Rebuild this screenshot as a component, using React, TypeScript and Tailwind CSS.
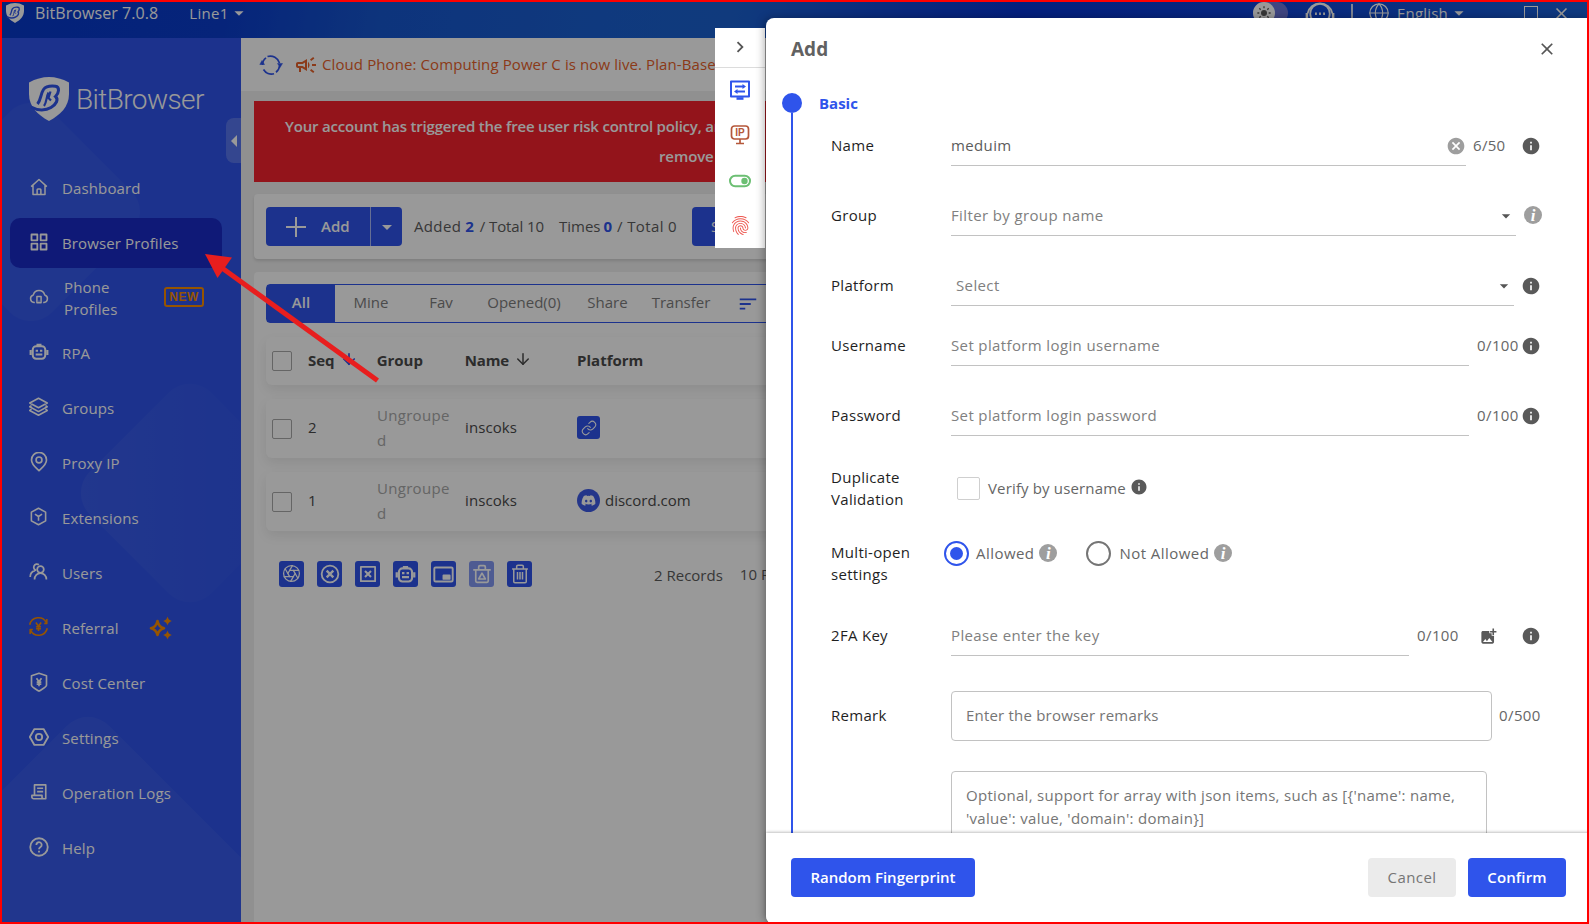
import type { ReactNode } from "react";
import {
  MdAddPhotoAlternate,
  MdArrowDropDown,
  MdCancel,
  MdChevronRight,
  MdClose,
  MdFingerprint,
  MdInfo,
  MdOutlineCampaign,
  MdSort,
} from "react-icons/md";
import { FaDiscord } from "react-icons/fa";
import { Aperture, ArrowDown, Globe, Link } from "lucide-react";

// ---------------------------------------------------------------------------
// Icons
// ---------------------------------------------------------------------------

function Svg({
  size = 20,
  sw = 1.8,
  className = "",
  children,
}: {
  size?: number;
  sw?: number;
  className?: string;
  children: ReactNode;
}) {
  return (
    <svg
      width={size}
      height={size}
      viewBox="0 0 24 24"
      fill="none"
      stroke="currentColor"
      strokeWidth={sw}
      strokeLinejoin="round"
      className={`shrink-0 ${className}`}
    >
      {children}
    </svg>
  );
}

const YEN = <path d="M9 7.5l3 4.2 3-4.2M12 11.7V17M9.2 12.2h5.6M9.2 14.6h5.6" />;

function ShieldLogo({ width, height }: { width: number; height: number }) {
  return (
    <svg width={width} height={height} viewBox="0 0 40 44" className="shrink-0">
      <path d="M0 5.5Q10 0 20 0T40 5.500V17C40 30 31 38 20 44 9 38 0 30 0 17Z" fill="currentColor" />
      <g fill="none" stroke="#2f54eb">
        <path
          d="M8.500 27C12 23 11.500 17 14.500 12.500 17 9 22 8.800 26.500 9.300 31 10 30 16 26.500 19.500 30 22.500 27 27.500 22 30.500 17 33.500 9 34 2 30"
          strokeWidth="3"
        />
        <path d="M15 29C18 25 17 20 19.500 15.500M21.500 14.500 19.500 21 22 23.500" strokeWidth="2.2" />
      </g>
    </svg>
  );
}

const HomeIcon = (
  <Svg size={18} sw={2}>
    <path d="M1.500 11.500 12 2l10.500 9.500M4 9.500V22h16V9.500M9.500 22V15.500a1 1 0 0 1 1-1h3a1 1 0 0 1 1 1V22" />
  </Svg>
);

const GridIcon = (
  <Svg sw={2.2}>
    <path d="M3 3h7v7H3zM14 3h7v7h-7zM3 14h7v7H3zM14 14h7v7h-7z" />
  </Svg>
);

const CloudPhoneIcon = (
  <Svg>
    <path d="M7 18.500H6A4.600 4.600 0 0 1 5.200 9.500 7 7 0 0 1 18.800 9.500 4.600 4.600 0 0 1 18 18.500h-1M9.500 11.500h5v7.500h-5zM12 16.500v1" />
  </Svg>
);

function RobotIcon({ size = 20 }: { size?: number }) {
  return (
    <Svg size={size} sw={2.4}>
      <rect x="4.5" y="5" width="15" height="15" rx="4" />
      <path d="M2 9.500v6M22 9.500v6M9 3.500h6M8 10.500h2.800M13.200 10.500H16M8 15h8" strokeWidth="2.6" />
    </Svg>
  );
}

const LayersIcon = (
  <Svg size={21}>
    <path d="M12 2.500 22 8l-10 5.500L2 8zM4 11l-2 1.300 10 5.500 10-5.500L20 11M4 15l-2 1.500L12 22l10-5.500-2-1.500" />
  </Svg>
);

const PinIcon = (
  <Svg size={20} sw={2}>
    <path d="M12 22.500c-3-3-9-7.500-9-13a9 9 0 0 1 18 0c0 5.500-6 10-9 13z" />
    <circle cx="12" cy="9.500" r="3.500" />
  </Svg>
);

const BoxIcon = (
  <Svg size={19} sw={2}>
    <path d="M12 1.500 21 6.500v11l-9 5-9-5v-11zM7.500 9l4.500 3 4.500-3M12 12v5.500" />
  </Svg>
);

const UsersIcon = (
  <Svg size={19} sw={2.2}>
    <circle cx="14.500" cy="9.500" r="4.2" />
    <path d="M7 22c0-4.500 3.500-8 7.500-8s7.500 3.500 7.500 8M9 10.500A4 4 0 1 1 12.500 3.500M1.500 19c0-4 2-7 6-8" />
  </Svg>
);

const ReferralIcon = (
  <Svg size={21} className="text-[#fa8c00]">
    <path d="M2 10A10.200 10.200 0 0 1 21 7.500M22 14a10.200 10.200 0 0 1-19 2.500M21.500 3.500v5h-3M2.500 20.500v-5h3" />
    {YEN}
  </Svg>
);

const CostIcon = (
  <Svg size={20} sw={2}>
    <path d="M12 1.500 21 4.500V16c0 2-5 4.500-9 7-4-2.500-9-5-9-7V4.500z" />
    {YEN}
  </Svg>
);

const SettingsIcon = (
  <Svg size={20} sw={2.2}>
    <path d="M6.500 2.500h11L23 12l-5.500 9.500h-11L1 12z" />
    <circle cx="12" cy="12" r="3.8" />
  </Svg>
);

const LogsIcon = (
  <Svg size={18} sw={2.2}>
    <path d="M6 16V2.500h15V21H5c-1.500 0-2.500-1-2.500-2.500V16.500H16V19c0 1 1 2 2.500 2M9.500 7h8M9.500 11.500h8" />
  </Svg>
);

const HelpIcon = (
  <Svg size={20} sw={2.2}>
    <circle cx="12" cy="12" r="10.5" />
    <path d="M8.800 9.500a3.200 3.200 0 1 1 5 2.600c-1.200.8-1.800 1.300-1.800 2.700M12 16.500v2" />
  </Svg>
);

function Sparkles() {
  return (
    <svg width="24" height="24" viewBox="0 0 24 24" className="text-[#fa8c00]">
      <path
        d="M8.500 5Q9.700 11 15 12.200 9.700 13.400 8.500 19 7.300 13.400 2 12.200 7.300 11 8.500 5Z"
        fill="none"
        stroke="currentColor"
        strokeWidth="2.6"
        strokeLinejoin="round"
      />
      <path
        d="M18.500.5Q19.200 4 22.800 5 19.200 6 18.500 9.500 17.800 6 14.200 5 17.800 4 18.500.5ZM18.500 14.500Q19.200 18 22.800 19 19.200 20 18.500 23.500 17.800 20 14.200 19 17.800 18 18.500 14.500Z"
        fill="currentColor"
      />
    </svg>
  );
}

function ItalicInfo({ className = "" }: { className?: string }) {
  return (
    <span
      className={`flex size-[18px] shrink-0 items-center justify-center rounded-full bg-[#9e9e9e] font-['Liberation_Serif',serif] text-[17px] leading-none font-bold text-white italic ${className}`}
    >
      i
    </span>
  );
}

function Info({ className = "" }: { className?: string }) {
  return <MdInfo className={`size-5 shrink-0 text-[#595959] ${className}`} />;
}

// ---------------------------------------------------------------------------
// Title bar
// ---------------------------------------------------------------------------

function TitleBar() {
  return (
    <header className="flex h-[38px] shrink-0 items-start bg-[linear-gradient(100deg,#0739ca_0%,#0a3ccc_14%,#1757cf_24%,#1a60d2_38%,#1b62d0_46%,#1146d0_56%,#0735d2_64%,#0d40d5_78%,#1961d5_100%)] text-white">
      <div className="flex h-[26px] items-center pl-[6px]">
        <ShieldLogo width={18} height={20} />
        <span className="ml-[11px] text-[16px] tracking-[0.07px]">BitBrowser 7.0.8</span>
        <span className="ml-[31px] text-[15px] tracking-[0.3px]">Line1</span>
        <MdArrowDropDown className="ml-[-1px] size-[22px]" />
      </div>
      <div className="ml-auto flex h-[26px] items-center pr-[18px]">
        <div className="flex w-[35px] items-center rounded-full bg-[#6a74d8]">
          <span className="flex size-[22px] items-center justify-center rounded-full bg-white">
            <Svg size={16} sw={2} className="text-[#5c5c5c]">
              <circle cx="12" cy="12" r="3.5" fill="currentColor" />
              <path d="M12 2v3M12 19v3M2 12h3M19 12h3M5 5l2 2M17 17l2 2M5 19l2-2M17 7l2-2" />
            </Svg>
          </span>
        </div>
        <Svg size={30} sw={1.4} className="ml-[17px]">
          <circle cx="12" cy="12.5" r="7.8" />
          <path d="M2 12.500a10.200 10.200 0 0 1 20 0" />
          <path d="M1.500 12v4.500M22.500 12v4.500M8 12.500h1.500M11.250 12.500h1.500M14.500 12.500H16" strokeWidth="2" />
        </Svg>
        <span className="ml-[16px] h-[18px] w-[2px] bg-white/80" />
        <Globe className="ml-[15px] size-[22px]" strokeWidth={1.3} />
        <span className="ml-[7px] text-[15px] tracking-[0.2px]">English</span>
        <MdArrowDropDown className="ml-0 size-[22px]" />
        <span className="ml-[54px] h-[14px] w-[14px] border border-white" />
        <MdClose className="ml-[14px] size-[19px]" />
      </div>
    </header>
  );
}

// ---------------------------------------------------------------------------
// Sidebar
// ---------------------------------------------------------------------------

const MENU: { label: string; icon: ReactNode; badge?: "new" | "sparkle" }[] = [
  { label: "Dashboard", icon: HomeIcon },
  { label: "Browser Profiles", icon: GridIcon },
  { label: "Phone Profiles", icon: CloudPhoneIcon, badge: "new" },
  { label: "RPA", icon: <RobotIcon /> },
  { label: "Groups", icon: LayersIcon },
  { label: "Proxy IP", icon: PinIcon },
  { label: "Extensions", icon: BoxIcon },
  { label: "Users", icon: UsersIcon },
  { label: "Referral", icon: ReferralIcon, badge: "sparkle" },
  { label: "Cost Center", icon: CostIcon },
  { label: "Settings", icon: SettingsIcon },
  { label: "Operation Logs", icon: LogsIcon },
  { label: "Help", icon: HelpIcon },
];

function Sidebar() {
  return (
    <aside className="relative flex w-[241px] shrink-0 flex-col overflow-hidden bg-[#2f54eb] pt-[38px] text-white">
      {/* Faded diamonds behind the menu */}
      <svg className="absolute inset-0" width="241" height="886" fill="white">
        <defs>
          <linearGradient id="fade" x1="0" y1="1" x2="1" y2="0">
            <stop offset="0" stopOpacity="0.05" stopColor="#fff" />
            <stop offset="1" stopOpacity="0" stopColor="#fff" />
          </linearGradient>
        </defs>
        <rect x="-55" y="88" width="172" height="172" rx="30" fillOpacity="0.035" transform="rotate(45 31 174)" />
        <rect x="104" y="369" width="172" height="172" rx="30" fill="url(#fade)" transform="rotate(45 190 455)" />
        <rect x="-92" y="741" width="360" height="360" rx="30" fillOpacity="0.045" transform="rotate(45 88 921)" />
      </svg>

      <div className="relative flex items-center pl-[29px]">
        <ShieldLogo width={40} height={44} />
        <span className="mt-[2px] ml-[7px] font-[Roboto,sans-serif] text-[28px] leading-[44px] font-light tracking-[-0.6px]">
          BitBrowser
        </span>
      </div>

      <nav className="relative mt-[41px] flex flex-col gap-[5px] px-[10px]">
        {MENU.map((m) => (
          <div
            key={m.label}
            className={`flex h-[50px] w-[212px] shrink-0 items-center rounded-[10px] ${
              m.label === "Browser Profiles" ? "bg-[#1a2bc6]" : ""
            }`}
          >
            <span className="flex w-[58px] shrink-0 items-center justify-center pr-[1px] pb-[3px]">{m.icon}</span>
            <span
              className={`text-[15px] leading-[22px] font-medium tracking-[0.13px] ${
                m.badge === "new" ? "mr-[31px] -ml-[5px] w-[70px] pl-[1px]" : "-ml-[6px]"
              }`}
            >
              {m.label}
            </span>
            {m.badge === "new" && (
              <span className="mb-[2px] flex h-[20px] w-[40px] shrink-0 items-center justify-center rounded-[3px] border-2 border-[#fa8c00] font-['Liberation_Sans',sans-serif] text-[12px] leading-none font-bold tracking-[0.5px] text-[#fa8c00]">
                NEW
              </span>
            )}
            {m.badge === "sparkle" && (
              <span className="ml-[30px]">
                <Sparkles />
              </span>
            )}
          </div>
        ))}
      </nav>

      {/* Collapse handle */}
      <div className="absolute top-[80px] right-0 flex h-[45px] w-[15px] items-center justify-center rounded-l-[8px] bg-white/20">
        <svg width="6" height="12" viewBox="0 0 6 12" fill="white">
          <path d="M6 0v12L0 6z" />
        </svg>
      </div>
    </aside>
  );
}

// ---------------------------------------------------------------------------
// Profile list
// ---------------------------------------------------------------------------

function Notice() {
  return (
    <div className="flex h-[53px] shrink-0 items-center bg-white pl-[18px] text-[15px] whitespace-nowrap text-[#e8622a]">
      <Svg size={24} sw={1.7} className="text-[#2f54eb]">
        <path d="M3.500 12A9 9 0 0 1 7 4.800M8.500 3.500A9.500 9.500 0 0 1 20.500 10M20.500 13A9 9 0 0 1 17 19.300M15 20.800A9.500 9.500 0 0 1 4.500 16.500" />
        <path d="M.800 11.500 3 7.500l2.500 4zM18.500 10.500l2.500 4 2.500-4z" fill="currentColor" strokeWidth=".5" />
      </Svg>
      <MdOutlineCampaign className="ml-[11px] size-[24px]" />
      <span className="ml-[4px] tracking-[0.1px]">Cloud Phone: Computing Power C is now live. Plan-Based</span>
    </div>
  );
}

const TABS = [
  { label: "Mine", cls: "w-[72px]" },
  { label: "Fav", cls: "w-[68px]" },
  { label: "Opened(0)", cls: "w-[98px]" },
  { label: "Share", cls: "w-[69px]" },
  { label: "Transfer", cls: "w-[78px]" },
];

function CheckBox() {
  return <span className="ml-[6px] size-[20px] shrink-0 rounded-[2px] border border-[#a8a8a8]" />;
}

function Row({ children, head }: { children: ReactNode; head?: boolean }) {
  return (
    <div
      className={`flex shrink-0 items-center rounded-[6px] bg-white text-[15px] text-[#4a4a4a] shadow-[0_5px_12px_rgba(0,0,0,0.08)] ${
        head ? "h-[48px] font-bold" : "h-[59px]"
      }`}
    >
      <CheckBox />
      <div className="flex items-center pb-[2px]">{children}</div>
    </div>
  );
}

function ProfileRow({ seq, platform }: { seq: number; platform: ReactNode }) {
  return (
    <Row>
      <span className="ml-[16px] w-[69px]">{seq}</span>
      <span className="w-[88px] leading-[25px] tracking-[0.3px] text-[#a8a8a8]">
        Ungroupe
        <br />d
      </span>
      <span className="w-[112px] tracking-[0.1px]">inscoks</span>
      {platform}
    </Row>
  );
}

const ACTIONS: { key: string; icon: ReactNode; dim?: boolean }[] = [
  { key: "aperture", icon: <Aperture className="mb-[2px] size-[19px]" strokeWidth={1.6} /> },
  {
    key: "close-round",
    icon: (
      <Svg sw={2.2}>
        <circle cx="12" cy="12" r="10" />
        <path d="M8 8l8 8M16 8l-8 8" strokeWidth="2.8" />
      </Svg>
    ),
  },
  {
    key: "close-square",
    icon: (
      <Svg size={18} sw={2.4}>
        <path d="M2.500 2.500h19v19h-19z" />
        <path d="M8 8l8 8M16 8l-8 8" strokeWidth="2.8" />
      </Svg>
    ),
  },
  { key: "robot", icon: <RobotIcon size={21} /> },
  {
    key: "window",
    icon: (
      <Svg size={21} sw={2.2}>
        <rect x="1.5" y="4" width="21" height="16" rx="1.5" />
        <path d="M12 13h7v4h-7z" fill="currentColor" />
      </Svg>
    ),
  },
  {
    key: "recycle",
    dim: true,
    icon: (
      <Svg sw={2}>
        <path d="M1.500 7h21M8 7V3.500A1.500 1.500 0 0 1 9.500 2h5A1.500 1.500 0 0 1 16 3.500V7M4.500 7v13.500A1.500 1.500 0 0 0 6 22h12a1.500 1.500 0 0 0 1.500-1.500V7M12 11l4 7H8z" />
      </Svg>
    ),
  },
  {
    key: "trash",
    icon: (
      <Svg sw={1.8}>
        <path d="M2.500 6h19M8 6V3a1.500 1.500 0 0 1 1.500-1.500h5A1.500 1.500 0 0 1 16 3v3M4.500 6v15A1.500 1.500 0 0 0 6 22.500h12a1.500 1.500 0 0 0 1.500-1.500V6M9 9.500v9M12 9.500v9M15 9.500v9" />
      </Svg>
    ),
  },
];

function Profiles() {
  return (
    <main className="flex min-w-0 flex-1 flex-col bg-[#f0f0f0]">
      <Notice />

      {/* Risk warning */}
      <div className="mt-[10px] ml-[13px] flex h-[81px] shrink-0 flex-col justify-center bg-[#f5222d] pb-[2px] text-[15px] leading-[30px] font-semibold whitespace-nowrap text-white">
        <span className="pl-[31px] tracking-[-0.2px]">
          Your account has triggered the free user risk control policy, and
        </span>
        <span className="pl-[405px] tracking-[-0.1px]">remove</span>
      </div>

      {/* Toolbar */}
      <div className="mt-[12px] ml-[13px] flex h-[65px] shrink-0 items-center rounded-[4px] bg-white px-3 text-[15px] whitespace-nowrap text-[#5c5c5c] shadow-[0_2px_3px_rgba(0,0,0,0.12)]">
        <div className="flex h-[39px] items-center rounded-[4px] bg-[#2f54eb] font-semibold text-white">
          <div className="flex h-full w-[105px] items-center border-r border-white/60 pl-[18px]">
            <Svg size={24} sw={2}>
              <path d="M12 2v20M2 12h20" />
            </Svg>
            <span className="ml-[13px]">Add</span>
          </div>
          <span className="flex w-[31px] justify-center">
            <MdArrowDropDown className="size-[24px]" />
          </span>
        </div>
        <span className="ml-[12px] tracking-[0.35px]">Added</span>
        <b className="ml-[4px] text-[#2f54eb]">2</b>
        <span className="ml-[6px] tracking-[-0.1px]">/ Total 10</span>
        <span className="ml-[15px]">Times</span>
        <b className="ml-[3px] text-[#2f54eb]">0</b>
        <span className="ml-[5px] tracking-[0.37px]">/ Total 0</span>
        <div className="ml-[15px] flex h-[39px] w-[56px] items-center rounded-[4px] bg-[#2f54eb] pl-[19px] text-white">
          Se
        </div>
      </div>

      {/* List */}
      <div className="mt-[13px] ml-[13px] flex min-h-0 flex-1 flex-col rounded-t-[4px] bg-white pt-[12px] pl-[12px]">
        <div className="flex h-[39px] shrink-0 items-center rounded-l-[4px] border border-[#2f54eb] text-[15px] text-[#7d7d7d]">
          <span className="flex h-full w-[68px] items-center justify-center bg-[#2f54eb] pb-[2px] font-semibold text-white">
            All
          </span>
          {TABS.map((t) => (
            <span key={t.label} className={`pb-[2px] text-center ${t.cls}`}>
              {t.label}
            </span>
          ))}
          <MdSort className="ml-[17px] size-[22px] text-[#2f54eb]" />
        </div>

        <div className="mt-[14px] flex flex-col gap-[14px]">
          <Row head>
            <span className="ml-[16px]">Seq</span>
            <ArrowDown className="mb-[2px] ml-[5px] size-[18px] text-[#2f54eb]" strokeWidth={2.2} />
            <span className="ml-[19px] w-[88px]">Group</span>
            <span className="tracking-[-0.1px]">Name</span>
            <ArrowDown className="mb-[2px] ml-[5px] size-[18px]" strokeWidth={2} />
            <span className="ml-[45px]">Platform</span>
          </Row>
          <ProfileRow
            seq={2}
            platform={
              <span className="flex size-[23px] items-center justify-center rounded-[3px] bg-[#2f54eb] text-white">
                <Link className="size-[16px]" strokeWidth={1.6} />
              </span>
            }
          />
          <ProfileRow
            seq={1}
            platform={
              <>
                <span className="flex size-[23px] items-center justify-center rounded-full bg-[#3d5ae6] text-white">
                  <FaDiscord className="size-[15px]" />
                </span>
                <span className="ml-[5px]">discord.com</span>
              </>
            }
          />
        </div>

        <div className="mt-[30px] flex items-center gap-[13px] pl-[13px] text-[15px] whitespace-nowrap text-[#5c5c5c]">
          {ACTIONS.map((a) => (
            <span
              key={a.key}
              className={`flex h-[26px] w-[25px] shrink-0 items-center justify-center rounded-[3px] text-white ${
                a.dim ? "bg-[#2f54eb]/60" : "bg-[#2f54eb]"
              }`}
            >
              {a.icon}
            </span>
          ))}
          <span className="mt-[2px] ml-[109px]">2 Records</span>
          <span className="ml-[4px]">10 R</span>
        </div>
      </div>
    </main>
  );
}

// ---------------------------------------------------------------------------
// Drawer
// ---------------------------------------------------------------------------

function Field({ label, className, children }: { label: string; className: string; children: ReactNode }) {
  return (
    <div className={`flex shrink-0 items-center ${className}`}>
      <span className="w-[120px] shrink-0 pr-5 pb-[2px] leading-[22px] tracking-[0.3px] text-[#1f1f1f]">{label}</span>
      {children}
    </div>
  );
}

function Line({ className, children }: { className: string; children: ReactNode }) {
  return (
    <div className={`flex h-[40px] shrink-0 items-center border-b border-[#c2c2c2] tracking-[0.37px] ${className}`}>
      {children}
    </div>
  );
}

function Drawer() {
  return (
    <section className="absolute top-[18px] right-0 bottom-0 flex w-[823px] flex-col rounded-l-[8px] bg-white text-[15px] text-[#666] shadow-[-2px_0_8px_rgba(0,0,0,0.3)]">
      <div className="flex h-[62px] shrink-0 items-center pr-[32px] pl-[25px]">
        <h2 className="text-[19px] font-bold text-[#616161]">Add</h2>
        <MdClose className="ml-auto size-[20px] text-[#555]" />
      </div>

      <div className="flex min-h-0 flex-1 overflow-hidden pl-[16px]">
        {/* Stepper rail */}
        <div className="flex w-[20px] shrink-0 flex-col items-center pt-[13px]">
          <span className="size-[20px] shrink-0 rounded-full bg-[#2f54eb]" />
          <span className="w-[2px] flex-1 bg-[#2f54eb]" />
        </div>

        <div className="flex flex-1 flex-col pl-[29px]">
          <h3 className="mt-[12px] -ml-[12px] h-[22px] leading-[22px] font-bold text-[#2f54eb]">Basic</h3>

          <Field label="Name" className="mt-[12px]">
            <Line className="w-[515px] text-[#5c5c5c]">
              meduim
              <MdCancel className="ml-auto size-5 text-[#9e9e9e]" />
            </Line>
            <span className="ml-[7px] w-[48px] pb-[2px] tracking-[0.3px]">6/50</span>
            <Info />
          </Field>

          <Field label="Group" className="mt-[30px]">
            <Line className="w-[565px] text-[#808080]">
              Filter by group name
              <MdArrowDropDown className="ml-auto size-[20px] text-[#555]" />
            </Line>
            <ItalicInfo className="mb-[2px] ml-[8px]" />
          </Field>

          <Field label="Platform" className="mt-[30px]">
            <Line className="w-[563px] pl-[5px] text-[#808080]">
              Select
              <MdArrowDropDown className="ml-auto size-[20px] text-[#555]" />
            </Line>
            <Info className="ml-[7px]" />
          </Field>

          <Field label="Username" className="mt-[20px]">
            <Line className="w-[518px] text-[#808080]">Set platform login username</Line>
            <span className="ml-[8px] w-[44px] pb-[2px] tracking-[0.4px]">0/100</span>
            <Info />
          </Field>

          <Field label="Password" className="mt-[30px]">
            <Line className="w-[518px] text-[#808080]">Set platform login password</Line>
            <span className="ml-[8px] w-[44px] pb-[2px] tracking-[0.4px]">0/100</span>
            <Info />
          </Field>

          <Field label="Duplicate Validation" className="mt-[31px] h-[44px]">
            <span className="mb-[2px] ml-[6px] size-[23px] rounded-[2px] border border-[#cfcfcf]" />
            <span className="ml-[8px] pb-[2px] tracking-[0.15px]">Verify by username</span>
            <MdInfo className="mb-[4px] ml-[4px] size-[18px] text-[#595959]" />
          </Field>

          <Field label="Multi-open settings" className="mt-[31px] h-[44px]">
            <div className="-mt-[22px] -ml-[7px] flex items-center tracking-[0.45px]">
              <span className="flex size-[25px] items-center justify-center rounded-full border-2 border-[#2f54eb]">
                <span className="size-[13px] rounded-full bg-[#2f54eb]" />
              </span>
              <span className="ml-[7px]">Allowed</span>
              <ItalicInfo className="ml-[5px]" />
              <span className="ml-[29px] size-[25px] rounded-full border-2 border-[#757575]" />
              <span className="ml-[8px]">Not Allowed</span>
              <ItalicInfo className="ml-[5px]" />
            </div>
          </Field>

          <Field label="2FA Key" className="mt-[30px]">
            <Line className="w-[458px] text-[#808080]">Please enter the key</Line>
            <span className="ml-[8px] w-[62px] pb-[2px] tracking-[0.4px]">0/100</span>
            <MdAddPhotoAlternate className="size-[19px] text-[#595959]" />
            <Info className="ml-[23px]" />
          </Field>

          <Field label="Remark" className="mt-[35px]">
            <div className="flex h-[50px] w-[541px] shrink-0 items-center rounded-[4px] border border-[#c2c2c2] pb-[2px] pl-[14px] tracking-[0.2px] text-[#757575]">
              Enter the browser remarks
            </div>
            <span className="ml-[7px] pb-[2px] tracking-[0.4px]">0/500</span>
          </Field>

          <div className="mt-[30px] ml-[120px] h-[120px] w-[536px] shrink-0 rounded-[4px] border border-[#c2c2c2] px-[14px] pt-[12px] leading-[23px] tracking-[0.29px] text-[#757575]">
            {"Optional, support for array with json items, such as [{'name': name, 'value': value, 'domain': domain}]"}
          </div>
        </div>
      </div>

      <div className="flex h-[91px] shrink-0 items-center rounded-bl-[8px] bg-white pr-[23px] pb-[2px] pl-[25px] font-semibold text-white shadow-[0_-1px_3px_rgba(0,0,0,0.25)]">
        <button className="h-[39px] w-[184px] rounded-[4px] bg-[#2f54eb]">Random Fingerprint</button>
        <button className="ml-auto h-[39px] w-[88px] rounded-[4px] bg-[#ebebeb] font-normal tracking-[0.4px] text-[#757575]">
          Cancel
        </button>
        <button className="ml-[12px] h-[39px] w-[98px] rounded-[4px] bg-[#2f54eb] tracking-[0.1px]">Confirm</button>
      </div>
    </section>
  );
}

function DrawerRail() {
  return (
    <div className="absolute top-[28px] left-[715px] flex h-[220px] w-[50px] flex-col items-center bg-white">
      <div className="flex h-[40px] w-full items-center justify-center border-b border-[#dcdcdc] pb-[1px]">
        <MdChevronRight className="size-[22px] text-[#555]" />
      </div>
      <div className="flex flex-1 flex-col items-center justify-between pt-[10px] pb-[11px]">
        <Svg size={24} sw={2} className="text-[#2f54eb]">
          <path d="M3 3.500h18v15H3zM7 8.500h9M8 13.500h9" />
          <path d="M8.500 20.500h7" strokeWidth="2.6" />
          <path d="M14.500 6l3.500 2.500-3.500 2.500zM9.500 11 6 13.500 9.500 16z" fill="currentColor" stroke="none" />
        </Svg>
        <div className="relative">
          <Svg size={24} sw={1.7} className="text-[#b5573a]">
            <rect x="3.5" y="3" width="17" height="13" rx="3" />
            <path d="M12 16v4.500M8 20.500h8" />
          </Svg>
          <span className="absolute top-[5px] left-0 w-full text-center font-['Liberation_Sans',sans-serif] text-[10px] leading-none font-bold text-[#b5573a]">
            IP
          </span>
        </div>
        <Svg size={24} sw={2} className="text-[#6cbf73]">
          <rect x="2" y="6.8" width="20" height="10.4" rx="5.2" />
          <circle cx="16.5" cy="12" r="3.2" fill="currentColor" stroke="none" />
        </Svg>
        <MdFingerprint className="size-[23px] text-[#ee5a52]" />
      </div>
    </div>
  );
}

export default function App() {
  return (
    <div className="relative flex h-[924px] w-[1589px] flex-col overflow-hidden font-['Open_Sans',sans-serif]">
      <TitleBar />
      <div className="flex min-h-0 flex-1">
        <Sidebar />
        <Profiles />
      </div>

      {/* Backdrop */}
      <div className="absolute inset-0 bg-black/40" />
      <DrawerRail />
      <Drawer />

      {/* Pointer to Browser Profiles */}
      <svg className="absolute inset-0" width="1589" height="924" fill="#e81e1e">
        <path d="M205 254 232 257.500 217.500 278Z" />
        <path d="M222 268 377.500 380.500" stroke="#e81e1e" strokeWidth="5" />
      </svg>

      <div className="absolute inset-0 border-2 border-[#ff0000]" />
    </div>
  );
}
